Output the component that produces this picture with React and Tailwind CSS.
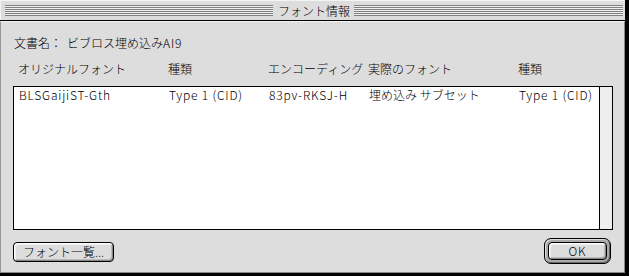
const FONT = "font-['Noto_Sans_CJK_JP','Noto_Sans_CJK_SC',sans-serif]";

const COLUMNS = [
  { label: "オリジナルフォント", width: "w-[150px]" },
  { label: "種類", width: "w-[100px]" },
  { label: "エンコーディング", width: "w-[100px]" },
  { label: "実際のフォント", width: "w-[150px]" },
  { label: "種類", width: "w-[80px]" },
];

const ROWS = [
  [
    { text: "BLSGaijiST-Gth", latin: true },
    { text: "Type 1 (CID)", latin: true },
    { text: "83pv-RKSJ-H", latin: true },
    { text: "埋め込み サブセット" },
    { text: "Type 1 (CID)", latin: true },
  ],
];

function Stripes({ className }) {
  return (
    <div className={`h-[11px] flex flex-col justify-between bg-[#eeeeee] ${className}`}>
      <div className="h-px bg-[#808080]" />
      <div className="h-px bg-[#808080]" />
      <div className="h-px bg-[#808080]" />
      <div className="h-px bg-[#808080]" />
      <div className="h-px bg-[#808080]" />
      <div className="h-px bg-[#808080]" />
    </div>
  );
}

function Cell({ width, latin, children }) {
  return (
    <div className={`${width} shrink-0 whitespace-nowrap`}>
      <span className={latin ? "tracking-[0.8px]" : ""}>{children}</span>
    </div>
  );
}

export default function App() {
  return (
    <div className={`w-[629px] h-[276px] bg-black ${FONT} font-light text-[12px] leading-[12px] text-black`}>
      <div className="w-[625px] h-[273px] flex flex-col bg-[#dddddd]">
        {/* title bar */}
        <header className="h-[20px] flex items-center bg-[#dddddd] border-t border-l border-[#f4f4f4] pl-[4px] pr-[2px]">
          <Stripes className="w-[268px]" />
          <h1 className="ml-[5px] mr-[4px] whitespace-nowrap font-light">フォント情報</h1>
          <Stripes className="flex-1" />
        </header>
        <div className="h-px bg-black" />

        {/* body */}
        <section className="flex-1 flex flex-col border-l border-l-[#999999] border-t border-t-[#f4f4f4] border-r border-r-[#888888] border-b border-b-[#888888] pl-[12px] pr-[11px]">
          <div className="mt-[15px] ml-[1px] flex whitespace-nowrap">
            <span>文書名：</span>
            <span className="ml-[5px]">ビブロス埋め込み</span>
            <span className="tracking-[0.8px]">AI9</span>
          </div>

          <div className="mt-[14px] pl-[5px] flex">
            {COLUMNS.map((col, i) => (
              <Cell key={i} width={col.width}>
                {col.label}
              </Cell>
            ))}
          </div>

          <div className="mt-[11px] h-[144px] flex border border-black bg-white">
            <div className="flex-1 pl-[5px] pt-[2px]">
              {ROWS.map((row, r) => (
                <div key={r} className="flex">
                  {row.map((cell, i) => (
                    <Cell key={i} width={COLUMNS[i].width} latin={cell.latin}>
                      {cell.text}
                    </Cell>
                  ))}
                </div>
              ))}
            </div>
            <div className="w-[15px] border-l border-black bg-[#eeeeee]" />
          </div>

          <div className="mt-[8px] flex items-start justify-between">
            <button className="mt-[4px] h-[20px] w-[101px] rounded-[4px] border border-black bg-[#dddddd] shadow-[inset_1px_1px_0_#ffffff,inset_-1px_-1px_0_#888888,inset_2px_2px_0_#eeeeee,inset_-2px_-2px_0_#bbbbbb] flex items-center justify-center whitespace-nowrap">
              フォント一覧...
            </button>
            <div className="mr-[2px] h-[26px] w-[67px] rounded-[7px] border border-black bg-[#aaaaaa] p-[3px] shadow-[inset_1px_1px_0_#dddddd,inset_-1px_-1px_0_#666666]">
              <button className="h-full w-full rounded-[4px] border border-black bg-[#dddddd] shadow-[inset_1px_1px_0_#ffffff,inset_-1px_-1px_0_#888888,inset_2px_2px_0_#eeeeee,inset_-2px_-2px_0_#bbbbbb] flex items-center justify-center tracking-[0.8px]">
                OK
              </button>
            </div>
          </div>
        </section>
      </div>
    </div>
  );
}
